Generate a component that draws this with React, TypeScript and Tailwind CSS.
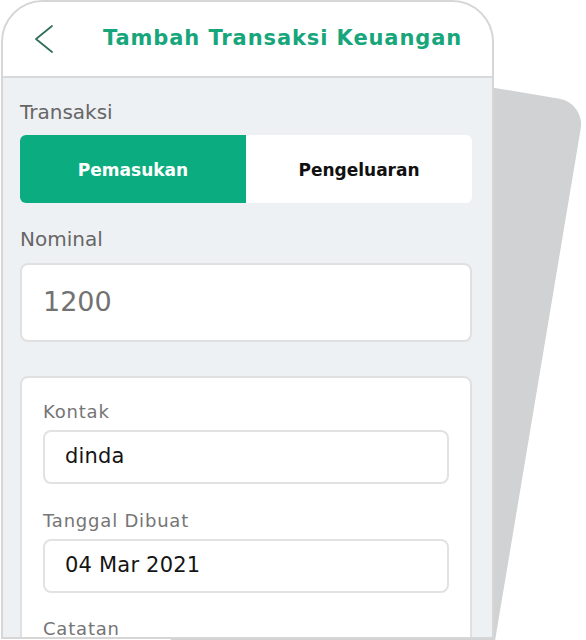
import React from 'react';

const Field: React.FC<{ label: string; value: string; className?: string }> = ({ label, value, className }) => (
  <div className={className}>
    <p className="text-[18px] leading-[22px] tracking-[0.8px] text-[#757575]">{label}</p>
    <div className="mt-[7px] h-[54px] bg-white border-2 border-[#e2e2e2] rounded-[8px] flex items-center pl-[20px]">
      <span className="text-[21px] tracking-[0.2px] text-[#151515]">{value}</span>
    </div>
  </div>
);

const App: React.FC = () => {
  return (
    <div className="relative w-[586px] h-[640px] overflow-hidden bg-white font-['DejaVu_Sans',sans-serif]">
      {/* kartu abu-abu di belakang */}
      <div className="absolute left-[265px] top-[103px] w-[320px] h-[700px] bg-[#d1d2d4] rounded-[26px] origin-top-right rotate-[9.5deg]" />

      <div className="relative z-10 ml-[1px] w-[493px] h-[639px] border-2 border-[#d6d6d6] rounded-t-[42px] overflow-hidden bg-[#eef1f4] flex flex-col">
        <div className="h-[76px] shrink-0 bg-white border-b-2 border-[#d9d9d9] flex items-center pl-[32px]">
          <svg width="18" height="28" viewBox="0 0 18 28" fill="none">
            <polyline points="17,1 1,14 17,27" stroke="#2f6e59" strokeWidth="1.7" strokeLinecap="round" strokeLinejoin="round" />
          </svg>
          <h1 className="ml-[50px] text-[21px] font-bold tracking-[0.9px] text-[#17a67b]">Tambah Transaksi Keuangan</h1>
        </div>

        <div className="pt-[22px] pl-[17px] pr-[20px]">
          <p className="text-[20px] leading-[24px] text-[#666666]">Transaksi</p>
          <div className="mt-[11px] h-[68px] flex rounded-[6px] overflow-hidden">
            <button className="flex-1 pt-[3px] bg-[#0bad80] text-white text-[17px] font-bold">Pemasukan</button>
            <button className="flex-1 pt-[3px] bg-white text-[#111111] text-[17px] font-bold">Pengeluaran</button>
          </div>

          <p className="mt-[24px] text-[20px] leading-[24px] text-[#666666]">Nominal</p>
          <div className="mt-[12px] h-[79px] bg-white border-2 border-[#e0e0e0] rounded-[8px] flex items-center pl-[21px]">
            <span className="text-[27px] text-[#727272]">1200</span>
          </div>

          <div className="mt-[34px] h-[300px] bg-white border-2 border-[#e0e0e0] rounded-[8px] pt-[23px] px-[21px]">
            <Field label="Kontak" value="dinda" />
            <Field label="Tanggal Dibuat" value="04 Mar 2021" className="mt-[26px]" />
            <p className="mt-[25px] text-[18px] leading-[22px] tracking-[0.8px] text-[#757575]">Catatan</p>
          </div>
        </div>
      </div>
    </div>
  );
};

export default App;
